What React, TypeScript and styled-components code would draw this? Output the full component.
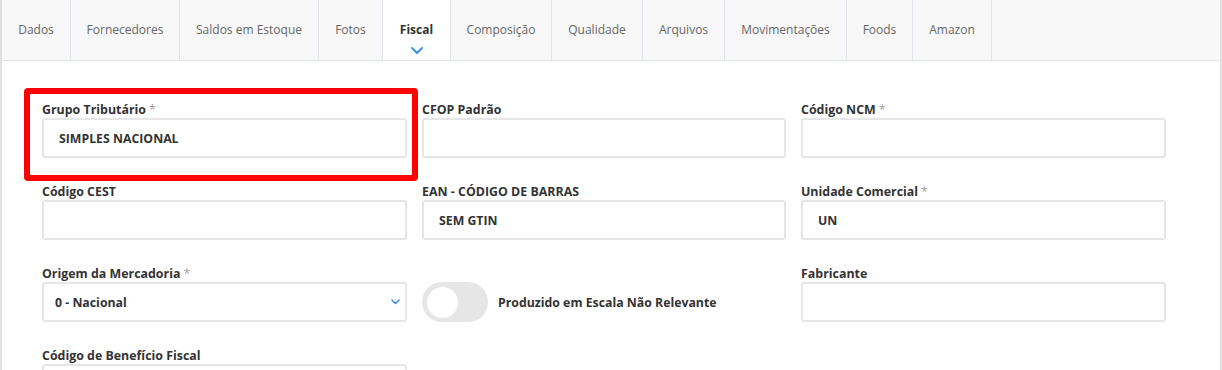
import React from "react";
import styled, { createGlobalStyle } from "styled-components";

const Global = createGlobalStyle`
  html, body { margin: 0; padding: 0; background: #fff; }
  body { font-family: "Open Sans", "Noto Sans", sans-serif; color: #333; }
  * { box-sizing: border-box; }
`;

const Page = styled.div`
  position: relative;
  width: 1222px;
  height: 370px;
  overflow: hidden;
  border-left: 2px solid #e1e1e1;
  border-right: 2px solid #e1e1e1;
`;

const TabBar = styled.div`
  display: flex;
  height: 61px;
  background: #f8f8f8;
  border-bottom: 1px solid #dfe4ea;
`;

const Tab = styled.div<{ $active?: boolean; $w: number }>`
  position: relative;
  width: ${(p) => p.$w}px;
  display: flex;
  align-items: center;
  justify-content: center;
  font-size: 12px;
  color: ${(p) => (p.$active ? "#333" : "#666")};
  font-weight: ${(p) => (p.$active ? 700 : 400)};
  background: ${(p) => (p.$active ? "#fff" : "transparent")};
  border-right: 1px solid #dfe4ea;
  padding-bottom: 1px;
`;

const TabChevron = styled.svg`
  position: absolute;
  left: 50%;
  bottom: 6px;
  transform: translateX(-50%);
`;

const Form = styled.div`
  display: grid;
  grid-template-columns: 365px 364px 365px;
  column-gap: 15px;
  row-gap: 24px;
  padding: 39px 0 0 40px;
`;

const Field = styled.div`
  display: flex;
  flex-direction: column;
`;

const Label = styled.label`
  font-size: 12.4px;
  font-weight: 700;
  color: #333;
  line-height: 16px;
  height: 18px;
  padding-top: 2px;
`;

const Req = styled.span`
  color: #a0a0a0;
  font-weight: 400;
  margin-left: 3px;
`;

const Input = styled.div`
  position: relative;
  height: 40px;
  border: 2px solid #e6e6e6;
  border-radius: 3px;
  background: #fff;
  display: flex;
  align-items: center;
  padding: 0 15px;
  font-size: 12.3px;
  font-weight: 700;
  color: #333;
`;

const SelectInput = styled(Input)`
  padding: 0 5px 0 11px;
  justify-content: space-between;
`;

const ToggleField = styled.div`
  display: flex;
  align-items: center;
  gap: 10px;
  padding-top: 18px;
`;

const Switch = styled.div`
  width: 66px;
  height: 40px;
  border-radius: 20px;
  background: #e6e6e6;
  display: flex;
  align-items: center;
  padding-left: 5px;
`;

const Knob = styled.div`
  width: 31px;
  height: 31px;
  border-radius: 50%;
  background: #fff;
`;

const ToggleLabel = styled.span`
  font-size: 12.3px;
  font-weight: 700;
  color: #333;
`;

const Highlight = styled.div`
  position: absolute;
  left: 22px;
  top: 88px;
  width: 394px;
  height: 93px;
  border: 6px solid #ff0000;
  border-radius: 4px;
  pointer-events: none;
`;

const tabs: [string, number][] = [
  ["Dados", 69],
  ["Fornecedores", 109],
  ["Saldos em Estoque", 139],
  ["Fotos", 64],
  ["Fiscal", 68],
  ["Composição", 101],
  ["Qualidade", 91],
  ["Arquivos", 82],
  ["Movimentações", 122],
  ["Foods", 66],
  ["Amazon", 79],
];

const Chevron = ({ w = 10 }: { w?: number }) => (
  <svg width={w} height={w * 0.6} viewBox="0 0 10 6" fill="none">
    <path d="M1 1 L5 5 L9 1" stroke="#2f8ee8" strokeWidth="1.6" strokeLinecap="round" strokeLinejoin="round" />
  </svg>
);

export default function App() {
  return (
    <>
      <Global />
      <Page>
        <TabBar>
          {tabs.map(([t, w]) => (
            <Tab key={t} $w={w} $active={t === "Fiscal"}>
              {t}
              {t === "Fiscal" && (
                <TabChevron width="12" height="7" viewBox="0 0 12 7" fill="none">
                  <path d="M1 1 L6 6 L11 1" stroke="#2f8ee8" strokeWidth="1.8" strokeLinecap="round" strokeLinejoin="round" />
                </TabChevron>
              )}
            </Tab>
          ))}
        </TabBar>
        <Form>
          <Field>
            <Label>Grupo Tributário<Req>*</Req></Label>
            <Input>SIMPLES NACIONAL</Input>
          </Field>
          <Field>
            <Label>CFOP Padrão</Label>
            <Input />
          </Field>
          <Field>
            <Label>Código NCM<Req>*</Req></Label>
            <Input />
          </Field>
          <Field>
            <Label>Código CEST</Label>
            <Input />
          </Field>
          <Field>
            <Label>EAN - CÓDIGO DE BARRAS</Label>
            <Input>SEM GTIN</Input>
          </Field>
          <Field>
            <Label>Unidade Comercial<Req>*</Req></Label>
            <Input>UN</Input>
          </Field>
          <Field>
            <Label>Origem da Mercadoria<Req>*</Req></Label>
            <SelectInput>
              <span>0 - Nacional</span>
              <Chevron w={9} />
            </SelectInput>
          </Field>
          <ToggleField>
            <Switch><Knob /></Switch>
            <ToggleLabel>Produzido em Escala Não Relevante</ToggleLabel>
          </ToggleField>
          <Field>
            <Label>Fabricante</Label>
            <Input />
          </Field>
          <Field>
            <Label>Código de Benefício Fiscal</Label>
            <Input />
          </Field>
        </Form>
        <Highlight />
      </Page>
    </>
  );
}
